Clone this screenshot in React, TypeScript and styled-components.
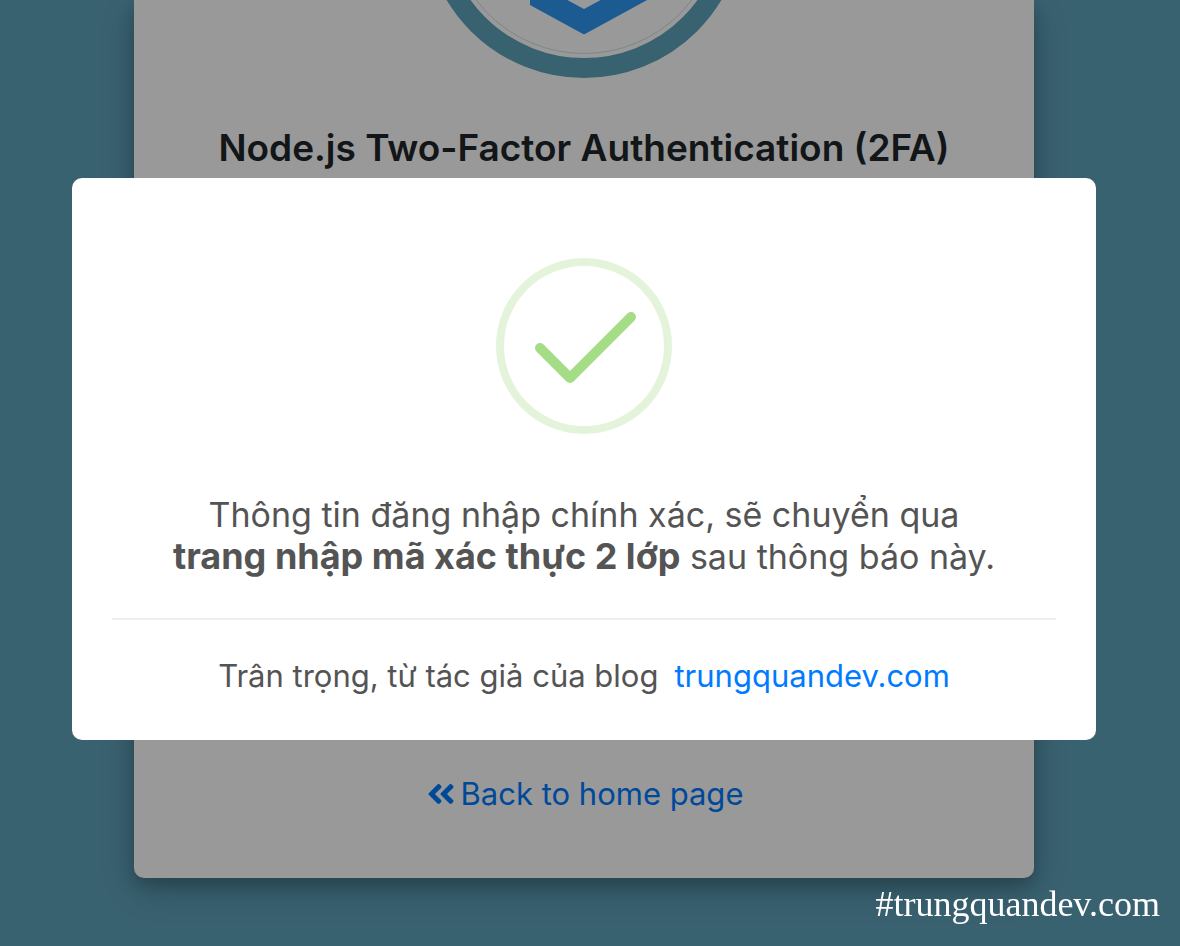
import React from "react";
import styled, { createGlobalStyle } from "styled-components";
import { FaAngleDoubleLeft } from "react-icons/fa";

const GlobalStyle = createGlobalStyle`
  *, *::before, *::after { box-sizing: border-box; }
  body {
    margin: 0;
    background: #60a3bc;
    font-family: Inter, "Noto Sans", sans-serif;
    font-size: 31px;
    line-height: 48px;
  }
`;

const Page = styled.main`
  display: flex;
  flex-direction: column;
  align-items: center;
  min-height: 100vh;
  padding: 0 12px 68px 0;
`;

const Card = styled.section`
  display: flex;
  flex: 1;
  flex-direction: column;
  align-items: center;
  width: 100%;
  max-width: 900px;
  padding-bottom: 60px;
  border-radius: 0 0 10px 10px;
  background: #fff;
  box-shadow: 0 8px 16px rgba(0, 0, 0, 0.2), 0 12px 40px rgba(0, 0, 0, 0.19);
`;

const Logo = styled.svg`
  display: block;
  flex: none;
`;

const Heading = styled.h1`
  margin: 46px 0 auto;
  color: #212529;
  font-size: 37px;
  font-weight: 600;
  line-height: 48px;
  text-align: center;
`;

const Link = styled.a`
  color: #007bff;
  text-decoration: none;
`;

const BackLink = styled(Link)`
  display: flex;
  align-items: center;
  gap: 4px;
`;

const Overlay = styled.div`
  position: fixed;
  inset: 0;
  display: flex;
  align-items: center;
  justify-content: center;
  padding: 0 12px 28px 0;
  background: rgba(0, 0, 0, 0.4);
`;

const Dialog = styled.div`
  display: flex;
  flex-direction: column;
  align-items: center;
  width: 100%;
  max-width: 1024px;
  padding: 80px 40px 40px;
  border-radius: 10px;
  background: #fff;
  color: #545454;
  text-align: center;
`;

const SuccessIcon = styled.svg`
  display: block;
  margin-bottom: 60px;
`;

const Message = styled.p`
  margin: 0 0 40px;
  font-size: 34px;
  line-height: 42px;
`;

const Emphasis = styled.strong`
  font-size: 36px;
  line-height: 1;
`;

const DialogFooter = styled.footer`
  display: flex;
  justify-content: center;
  gap: 16px;
  width: 100%;
  padding-top: 32px;
  border-top: 2px solid #eee;
`;

const Watermark = styled.div`
  position: fixed;
  right: 20px;
  bottom: 20px;
  color: #fff;
  font-family: "Liberation Serif", serif;
  font-size: 36px;
  line-height: 44px;
`;

export default function App() {
  return (
    <>
      <GlobalStyle />
      <Page>
        <Card>
          <Logo width="320" height="78" viewBox="0 0 320 78" aria-hidden="true">
            <circle cx="160" cy="-82" r="150" fill="none" stroke="#60a3bc" strokeWidth="20" />
            <circle cx="160" cy="-82" r="135.5" fill="none" stroke="#d5e0e2" strokeWidth="1" />
            <path d="M106 -20V5L160 34.5L236 -7V-32L160 9Z" fill="#3096f3" />
          </Logo>
          <Heading>Node.js Two-Factor Authentication (2FA)</Heading>
          <BackLink href="#home">
            <FaAngleDoubleLeft size={32} aria-hidden="true" />
            Back to home page
          </BackLink>
        </Card>
      </Page>
      <Overlay>
        <Dialog role="dialog" aria-modal="true" aria-describedby="message">
          <SuccessIcon width="176" height="176" viewBox="0 0 176 176" aria-hidden="true">
            <circle cx="88" cy="88" r="84" fill="none" stroke="#a5dc86" strokeOpacity="0.3" strokeWidth="8" />
            <path
              d="M44 90L74 120L135 59"
              fill="none"
              stroke="#a5dc86"
              strokeWidth="10"
              strokeLinecap="round"
              strokeLinejoin="round"
            />
          </SuccessIcon>
          <Message id="message">
            Thông tin đăng nhập chính xác, sẽ chuyển qua
            <br />
            <Emphasis>trang nhập mã xác thực 2 lớp</Emphasis> sau thông báo này.
          </Message>
          <DialogFooter>
            <span>Trân trọng, từ tác giả của blog</span>
            <Link href="#blog">trungquandev.com</Link>
          </DialogFooter>
        </Dialog>
      </Overlay>
      <Watermark>#trungquandev.com</Watermark>
    </>
  );
}
